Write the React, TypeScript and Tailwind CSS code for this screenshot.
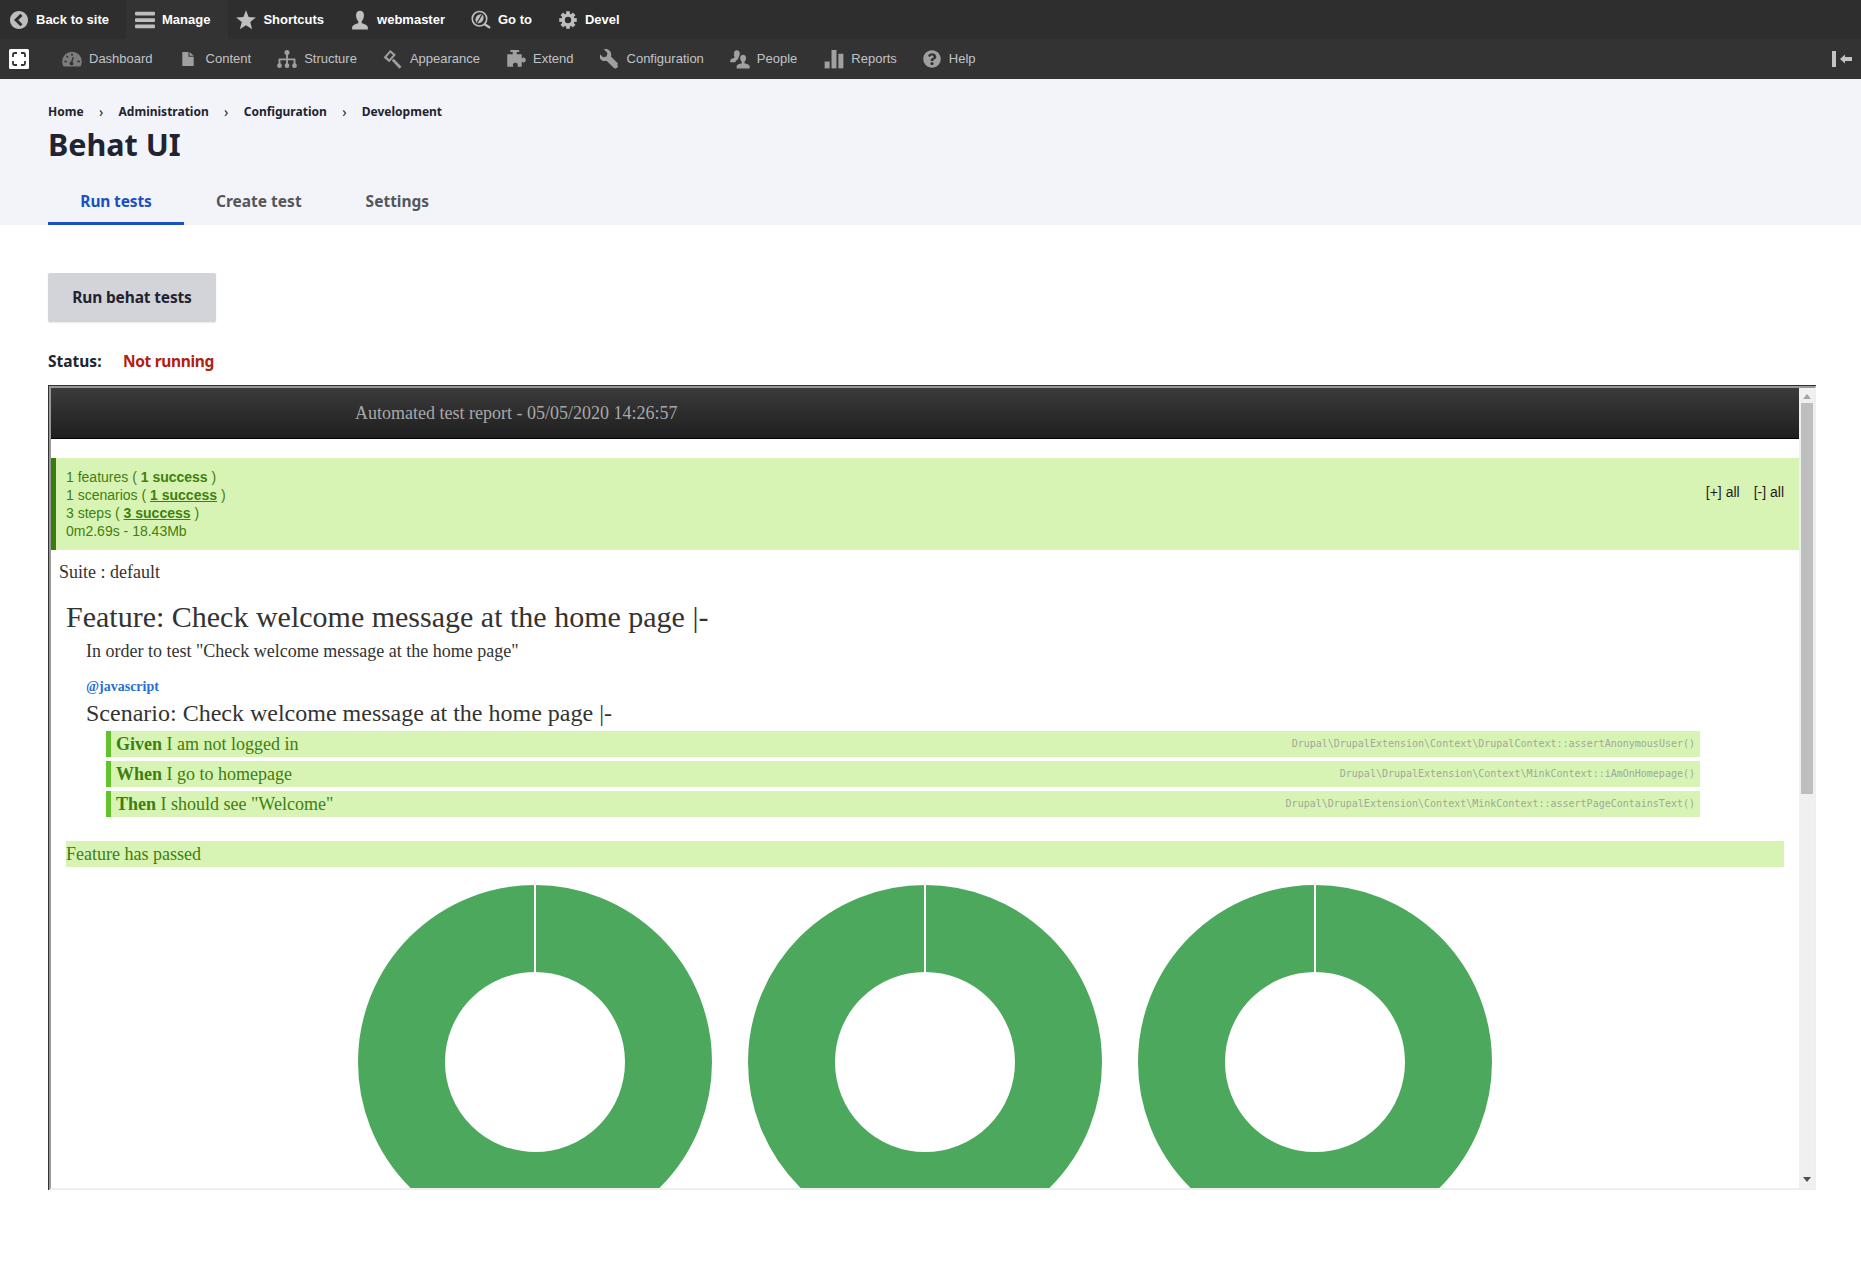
import React from "react";
import { FaQuestionCircle } from "react-icons/fa";

const Svg = ({ children, w = 20 }: { children: React.ReactNode; w?: number }) => (
  <svg width={w} height={20} viewBox="0 0 16 16" className="shrink-0" fill="currentColor">
    {children}
  </svg>
);

const BackIcon = () => (
  <Svg w={20}>
    <path d="M8 .8C4 .8.800 4 .800 8S4 15.200 8 15.200 15.200 12 15.200 8 12 .8 8 .8zm2.800 10.500-1.700 1.700L4 8l5.100-5 1.700 1.700L7.400 8l3.400 3.300z" />
  </Svg>
);
const BarsIcon = () => (
  <Svg>
    <rect x="0" y="1.400" width="16" height="3" rx=".8" />
    <rect x="0" y="6.500" width="16" height="3" rx=".8" />
    <rect x="0" y="11.600" width="16" height="3" rx=".8" />
  </Svg>
);
const StarIcon = () => (
  <Svg>
    <path d="M8 .2l2.100 5.300 5.800.4-4.500 3.700 1.500 5.800L8 12.200l-4.900 3.200 1.500-5.800L.1 5.900l5.800-.4z" />
  </Svg>
);
const UserIcon = () => (
  <Svg w={20}>
    <path d="M8 .5c2 0 3.200 1.500 3.200 3.600 0 2-.9 3.900-1.800 4.800v1.600c1.900.5 4.900 1.500 4.900 3.400v1.600H1.700v-1.600c0-1.900 3-2.900 4.900-3.400V8.900C5.700 8 4.800 6.100 4.800 4.100 4.800 2 6 .5 8 .5z" />
  </Svg>
);
const GotoIcon = () => (
  <Svg>
    <circle cx="6.800" cy="7" r="5.800" fill="none" stroke="currentColor" strokeWidth="1.300" />
    <ellipse cx="6.800" cy="7" rx="3" ry="3.800" transform="rotate(35 6.800 7)" />
    <path d="M5 10 8.600 4" stroke="#2e2e2e" strokeWidth="1" />
    <path d="M11.200 11.600l3.400 2.200" stroke="currentColor" strokeWidth="2" strokeLinecap="round" />
  </Svg>
);
const GearIcon = () => (
  <Svg>
    <circle cx="8" cy="8" r="3.900" fill="none" stroke="currentColor" strokeWidth="2.700" />
    {[0, 45, 90, 135, 180, 225, 270, 315].map((a) => (
      <rect key={a} x="6.500" y="1" width="3" height="3" transform={`rotate(${a} 8 8)`} />
    ))}
  </Svg>
);
const LogoIcon = () => (
  <svg width="20" height="20" viewBox="0 0 20 20" className="shrink-0">
    <rect width="20" height="20" rx="1.500" fill="#fff" />
    <path
      d="M4 8V5.500A1.500 1.500 0 0 1 5.500 4H8M12 4h2.500A1.500 1.500 0 0 1 16 5.500V8M16 12v2.500a1.500 1.500 0 0 1-1.500 1.500H12M8 16H5.500A1.500 1.500 0 0 1 4 14.500V12"
      fill="none"
      stroke="#333"
      strokeWidth="1.800"
    />
  </svg>
);
const DashIcon = () => (
  <Svg>
    <path d="M8 2.200A7.800 7.800 0 0 0 .2 10c0 1.500.4 2.900 1.100 4h13.400c.7-1.100 1.100-2.500 1.100-4A7.800 7.800 0 0 0 8 2.200z" />
    <path d="M8 3.500v2M3.600 5.600l1.300 1.300M1.900 10h2M12.300 10h2M9 6.500 7.600 11" stroke="#333" strokeWidth="1.100" fill="none" />
    <circle cx="7.600" cy="11.500" r="1.500" fill="#333" />
  </Svg>
);
const FileIcon = () => (
  <Svg w={14}>
    <path d="M1.500 0h7v5.500h6V16h-13z" />
    <path d="M9.700 0l4.800 4.300H9.700z" />
  </Svg>
);
const TreeIcon = () => (
  <Svg>
    <circle cx="8" cy="2.800" r="2" />
    <circle cx="2" cy="13.300" r="1.900" />
    <circle cx="8" cy="13.300" r="1.900" />
    <circle cx="14" cy="13.300" r="1.900" />
    <path d="M8 3v10M2 13V8.300h12V13" fill="none" stroke="currentColor" strokeWidth="1.500" />
  </Svg>
);
const BrushIcon = () => (
  <Svg>
    <path d="M5.800.8.500 6.800l4.500 3.800 5.300-6z M5.900 3 3 6.300l2 1.800L8 4.800z" fillRule="evenodd" />
    <path d="M7.800 8.500l6.200 6.500" stroke="currentColor" strokeWidth="2.200" />
  </Svg>
);
const PuzzleIcon = () => (
  <Svg>
    <path d="M3.500.8h7v1.600H8.600v1.800h4v3.300c.5-.5 1-.8 1.500-.8 1 0 1.700.9 1.700 2s-.7 2-1.700 2c-.5 0-1-.3-1.500-.8v4.300H9c.3-.5.500-1 .5-1.500 0-1-.9-1.700-2-1.700s-2 .7-2 1.700c0 .5.200 1 .5 1.500H1V4.200h4.400V2.400H3.500z" />
  </Svg>
);
const WrenchIcon = () => (
  <Svg>
    <path d="M14.416 11.586l-.01-.008v-.001l-5.656-5.656c.15-.449.25-.921.25-1.420 0-2.485-2.016-4.500-4.500-4.500-.5 0-.972.1-1.420.25l2.920 2.920-.75 2.750-2.750.75-2.920-2.920c-.15.448-.25.92-.25 1.420 0 2.485 2.015 4.500 4.500 4.500.5 0 .971-.1 1.420-.25l5.657 5.657.008.006c.78.78 2.048.78 2.830 0 .78-.782.78-2.050 0-2.830z" />
  </Svg>
);
const PeopleIcon = () => (
  <Svg>
    <path d="M5.500 1c1.400 0 2.300 1 2.300 2.500S7.200 6.300 6.600 6.900v1.300c-.6.200-2 .9-2.400 2.300H.2V9.300c0-1.300 2-2 3.300-2.300V6C3 5.400 3.200 4.800 3.200 3.500 3.200 2 4.100 1 5.500 1z" />
    <path d="M10.500 4.500c1.400 0 2.400 1.100 2.400 2.600 0 1.300-.7 2.500-1.300 3.100v1.200c1.400.3 4.100 1 4.100 2.400V15.500H5.300v-1.700c0-1.400 2.700-2.100 4.100-2.400v-1.200c-.6-.6-1.300-1.800-1.300-3.100 0-1.500 1-2.600 2.400-2.600z" />
  </Svg>
);
const ChartIcon = () => (
  <Svg>
    <rect x="0.500" y="10" width="4" height="5.500" />
    <rect x="6" y="0.800" width="4" height="14.700" />
    <rect x="11.500" y="3.800" width="4" height="11.700" />
  </Svg>
);

const topItems = [
  { label: "Back to site", icon: <BackIcon />, cls: "pl-[9px] pr-[17px] gap-[7px]" },
  { label: "Manage", icon: <BarsIcon />, cls: "pl-[9px] pr-[18px] gap-[7px] bg-[#333333]" },
  { label: "Shortcuts", icon: <StarIcon />, cls: "pl-2 pr-[18px] gap-[7px]" },
  { label: "webmaster", icon: <UserIcon />, cls: "pl-2 pr-[18px] gap-[7px]" },
  { label: "Go to", icon: <GotoIcon />, cls: "pl-2 pr-[18px] gap-[7px]" },
  { label: "Devel", icon: <GearIcon />, cls: "pl-2 pr-[18px] gap-[7px]" },
];

const subItems = [
  { label: "Dashboard", icon: <DashIcon />, cls: "text-[#7c7c7c] ml-[33px]" },
  { label: "Content", icon: <FileIcon />, cls: "text-[#a0a0a0] ml-[28px]", gap: "gap-[11px]" },
  { label: "Structure", icon: <TreeIcon />, cls: "text-[#a0a0a0] ml-[26px]" },
  { label: "Appearance", icon: <BrushIcon />, cls: "text-[#a0a0a0] ml-[26px]" },
  { label: "Extend", icon: <PuzzleIcon />, cls: "text-[#a0a0a0] ml-[26px]" },
  { label: "Configuration", icon: <WrenchIcon />, cls: "text-[#a0a0a0] ml-[26px]" },
  { label: "People", icon: <PeopleIcon />, cls: "text-[#a0a0a0] ml-[26px]" },
  { label: "Reports", icon: <ChartIcon />, cls: "text-[#a0a0a0] ml-[27px]" },
];

const crumbs = ["Home", "Administration", "Configuration", "Development"];

const steps = [
  { kw: "Given", text: "I am not logged in", ctx: "Drupal\\DrupalExtension\\Context\\DrupalContext::assertAnonymousUser()" },
  { kw: "When", text: "I go to homepage", ctx: "Drupal\\DrupalExtension\\Context\\MinkContext::iAmOnHomepage()" },
  { kw: "Then", text: 'I should see "Welcome"', ctx: "Drupal\\DrupalExtension\\Context\\MinkContext::assertPageContainsText()" },
];

const Donut = () => (
  <svg width="354" height="354" viewBox="0 0 354 354" className="shrink-0">
    <circle cx="177" cy="177" r="133.500" fill="none" stroke="#4ca85c" strokeWidth="87" />
    <rect x="176" y="0" width="2" height="87" fill="#fff" />
  </svg>
);

const ui = "font-['Noto_Sans',sans-serif]";
const serif = "font-['Liberation_Serif',serif]";
const sans = "font-['Liberation_Sans',sans-serif]";

export default function App() {
  return (
    <div className="min-h-[1284px] bg-white">
      <nav className={`${sans} flex h-[39px] bg-[#2e2e2e] text-[13px] font-bold text-white`}>
        {topItems.map((t) => (
          <div key={t.label} className={`flex items-center ${t.cls}`}>
            <span className="flex text-[#bebebe]">{t.icon}</span>
            <span>{t.label}</span>
          </div>
        ))}
      </nav>
      <nav className={`${sans} flex h-10 items-center bg-[#333333] pl-[9px] pr-[9px] text-[13px] text-[#c0c4c8]`}>
        <LogoIcon />
        {subItems.map((s) => (
          <div key={s.label} className={`flex items-center ${s.gap ?? "gap-[7px]"} ${s.cls}`}>
            {s.icon}
            <span className="text-[#c0c4c8]">{s.label}</span>
          </div>
        ))}
        <div className="ml-[26px] flex items-center gap-[8px]">
          <FaQuestionCircle className="text-[#a0a0a0]" size={18} />
          <span>Help</span>
        </div>
        <svg width="20" height="16" viewBox="0 0 20 16" className="ml-auto text-[#c4c4c4]" fill="currentColor">
          <rect x="0" y="0" width="4" height="16" />
          <path d="M8 8l5-4.500V6h7v4h-7v2.500z" />
        </svg>
      </nav>

      <header className={`${ui} h-[146px] bg-[#f3f4f9] px-12 pt-6 text-[#222330]`}>
        <ol className="flex h-[18px] items-center text-[12px] font-bold leading-[18px]">
          {crumbs.map((c, i) => (
            <li key={c} className="flex items-center">
              {i > 0 && <span className="w-[35px] text-center text-[14px] font-normal">›</span>}
              {c}
            </li>
          ))}
        </ol>
        <h1 className="mt-[5px] text-[30.500px] font-bold leading-[36px]">Behat UI</h1>
        <div className="mt-6 flex h-[39px] text-[15.500px] font-bold text-[#55565b]">
          <div className="flex h-[39px] w-[136px] items-start justify-center border-b-[3px] border-[#1b4fc4] pt-1 tracking-[-0.15px] text-[#1b4fc4]">
            Run tests
          </div>
          <div className="pl-[32px] pt-1">Create test</div>
          <div className="pl-[64px] pt-1">Settings</div>
        </div>
      </header>

      <main className="ml-12 mr-[45px]">
        <button className={`${ui} mt-12 flex h-[49px] w-[168px] items-center justify-center rounded-[2px] bg-[#d3d4d9] text-[15.500px] font-bold tracking-[-0.15px] text-[#222330] shadow-[0_1px_2px_rgba(34,35,48,0.1)]`}>
          Run behat tests
        </button>
        <div className={`${ui} mt-[27px] flex h-6 items-center text-[15.500px] font-bold leading-6`}>
          <span className="w-[75px] text-[#222330]">Status:</span>
          <span className="tracking-[-0.35px] text-[#b3200f]">Not running</span>
        </div>

        <div className="mt-[12px] h-[805px] border-l border-t border-[#333333]">
          <div className="flex h-[804px] border-b-2 border-l-2 border-r border-t-2 border-b-[#eeeeee] border-l-[#999999] border-r-[#eeeeee] border-t-[#999999]">
            <div className="min-w-0 flex-1 overflow-hidden">
              <div className={`${serif} flex h-[51px] items-center border-b border-black bg-gradient-to-b from-[#3b3b3b] to-[#1f1f1f] pl-[304px] text-[18px] text-[#a8a8a8]`}>
                Automated test report - 05/05/2020 14:26:57
              </div>
              <section className={`${sans} mt-[19px] flex h-[92px] items-center justify-between border-l-[5px] border-[#3b7d0c] bg-[#d8f4b4] pl-[10px] pr-[15px] text-[14px] leading-[18px] text-[#3f7f0e]`}>
                <div>
                  <div>1 features ( <b>1 success</b> )</div>
                  <div>1 scenarios ( <b className="underline">1 success</b> )</div>
                  <div>3 steps ( <b className="underline">3 success</b> )</div>
                  <div>0m2.69s - 18.43Mb</div>
                </div>
                <div className="flex gap-[14px] pb-6 text-[#1c1c1c]">
                  <span>[+] all</span>
                  <span>[-] all</span>
                </div>
              </section>
              <div className={`${serif} text-[#333333]`}>
                <div className="mt-[10px] pl-2 text-[18px] leading-6">Suite : default</div>
                <div className="mt-[15px] pl-[15px] text-[30px] leading-9">Feature: Check welcome message at the home page |-</div>
                <div className="mt-1 pl-[35px] text-[18px] leading-6">In order to test "Check welcome message at the home page"</div>
                <div className="mt-[15px] pl-[35px] text-[14px] font-bold leading-[18px] text-[#2b6fd1]">@javascript</div>
                <div className="mt-[2px] pl-[35px] text-[24px] leading-[30px]">Scenario: Check welcome message at the home page |-</div>
                <div className="ml-[55px] mt-[3px] flex w-[1594px] flex-col gap-1">
                  {steps.map((s) => (
                    <div key={s.kw} className="flex h-[26px] items-center justify-between border-l-[5px] border-[#62c32c] bg-[#d8f4b4] pl-[5px] pr-[5px] text-[18px] text-[#3f7f0e]">
                      <span>
                        <b>{s.kw}</b> {s.text}
                      </span>
                      <span className="-mt-[2px] font-['DejaVu_Sans_Mono',monospace] text-[10px] text-[#a0a89a]">{s.ctx}</span>
                    </div>
                  ))}
                </div>
                <div className="ml-[15px] mr-[15px] mt-6 flex h-[26px] items-center bg-[#d8f4b4] text-[18px] text-[#3f7f0e]">Feature has passed</div>
                <div className="ml-[307px] mt-[18px] flex gap-9">
                  <Donut />
                  <Donut />
                  <Donut />
                </div>
              </div>
            </div>
            <div className="flex w-[16px] shrink-0 flex-col items-center bg-[#f0f0f0]">
              <svg width="8" height="5" viewBox="0 0 8 5" className="mt-[6px] shrink-0" fill="#a3a3a3"><path d="M4 0l4 5H0z" /></svg>
              <div className="mt-[4px] h-[391px] w-[12px] bg-[#bebebe]" />
              <svg width="8" height="5" viewBox="0 0 8 5" className="mb-[6px] mt-auto shrink-0" fill="#505050"><path d="M4 5L0 0h8z" /></svg>
            </div>
          </div>
        </div>
      </main>
    </div>
  );
}
